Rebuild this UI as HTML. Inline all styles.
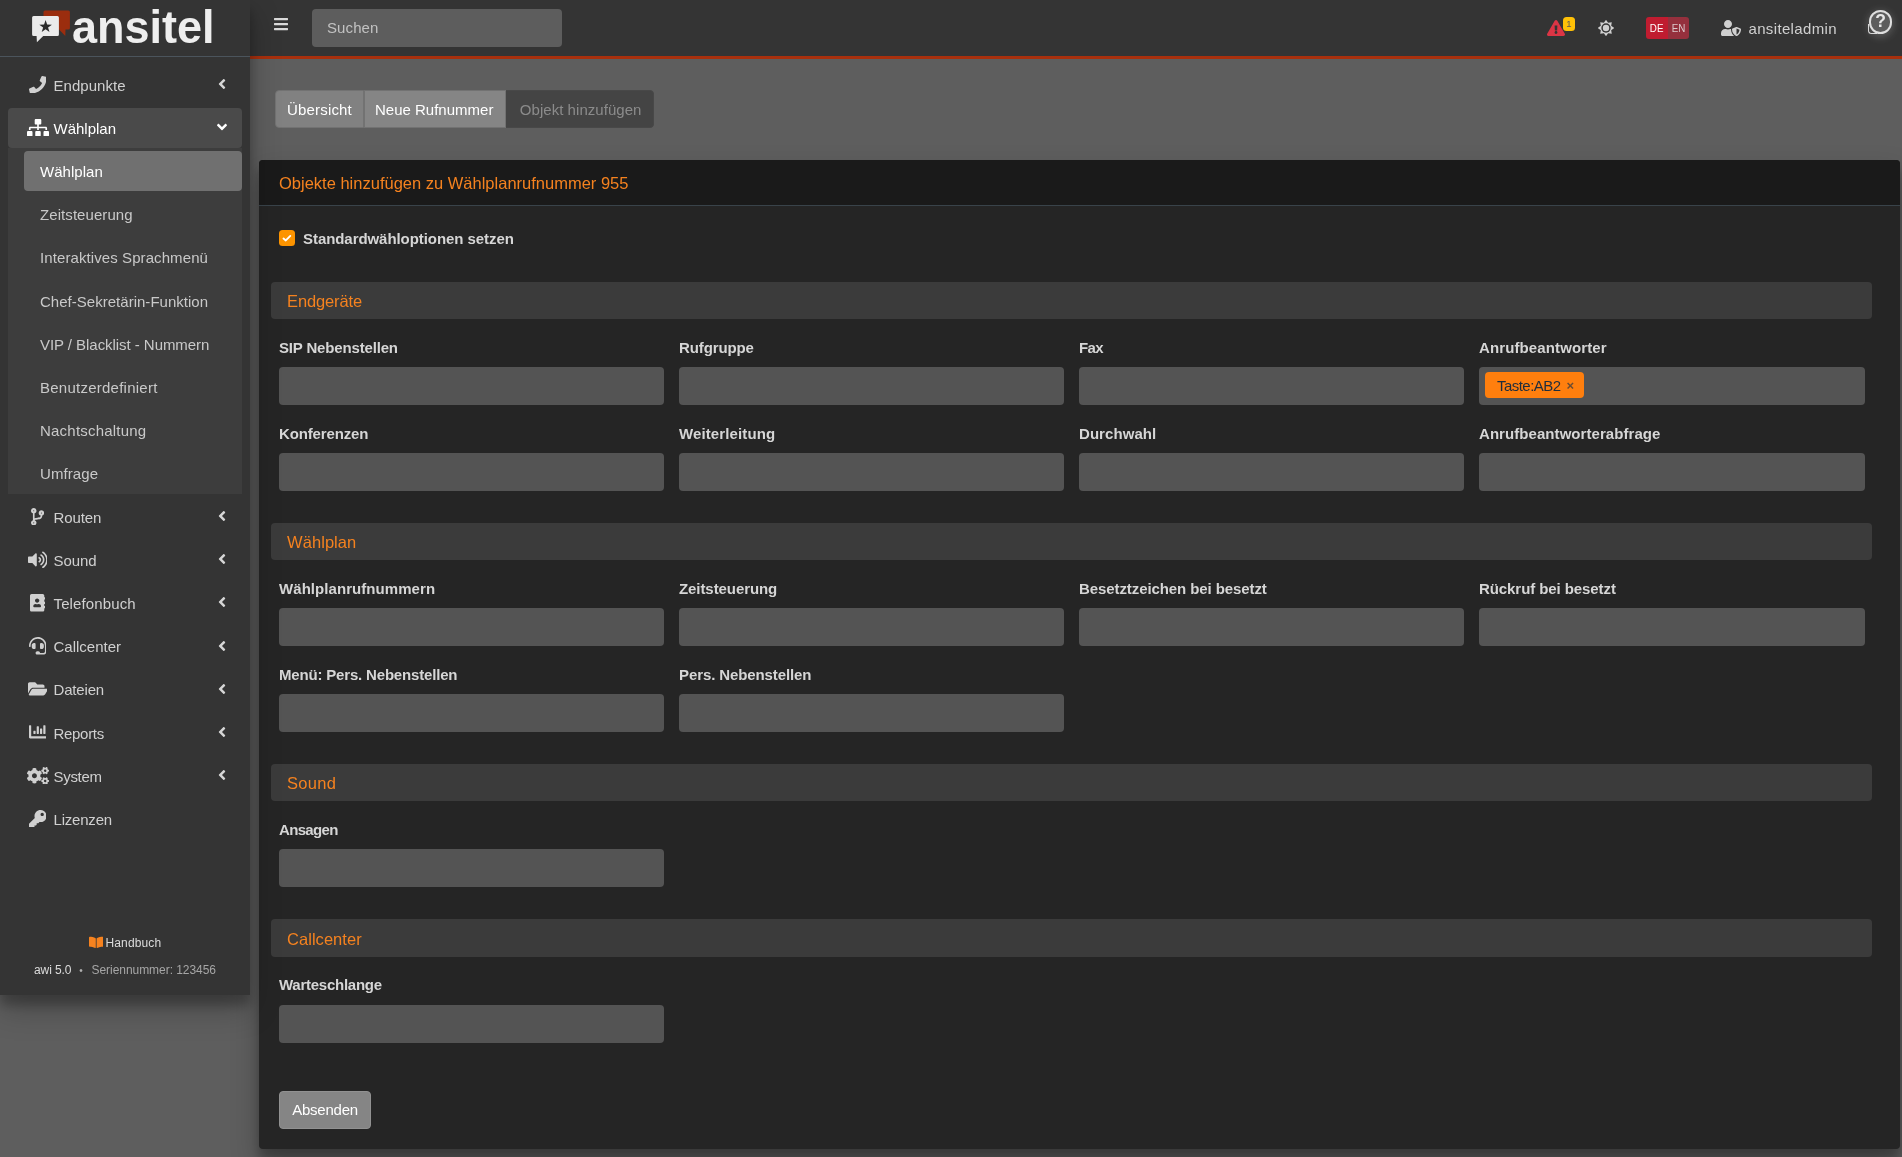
<!DOCTYPE html>
<html lang="de">
<head>
<meta charset="utf-8">
<title>ansitel - Wählplan</title>
<style>
*{box-sizing:border-box;margin:0;padding:0}
html,body{width:1902px;height:1157px;overflow:hidden}
body{background:#5e5e5e;font-family:"Liberation Sans",sans-serif;font-size:15px;color:#d6d6d6;position:relative}
svg{display:block}
/* ---------- navbar ---------- */
#navbar{will-change:transform;position:absolute;left:250px;top:0;width:1652px;height:59px;background:#343434;border-bottom:3px solid #a8300d}
#burger{position:absolute;left:24px;top:16px;width:14px;height:16px;fill:#d9d9d9}
#search{position:absolute;left:62px;top:9px;width:250px;height:38px;background:#5d5d5d;border-radius:4px;color:#c2c2c2;font-size:15px;line-height:38px;padding-left:15px}
#alert{position:absolute;left:1296.9px;top:19.8px;width:18px;height:16px;fill:#dc3545}
#badge{position:absolute;left:1313px;top:17px;width:12px;height:14px;background:#ffc107;border-radius:3.5px;color:#5a5a5a;font-size:9.500px;line-height:14px;text-align:center}
#sun{position:absolute;left:1347.600px;top:20px}
#lang{position:absolute;left:1396px;top:17px;width:43px;height:22px;border-radius:3px;overflow:hidden;display:flex;font-size:11px;line-height:23px;color:#fff;text-align:center}
#lang span{display:inline-block;transform:scaleX(.89)}
#lang .de{width:22px;background:#c01c30}
#lang .en{width:21px;background:#95303d;color:#dcc9cc}
#usr{position:absolute;left:1471px;top:20px;width:20px;height:16px;fill:#d0d0d0}
#uname{position:absolute;left:1498.500px;top:17px;line-height:23px;font-size:15px;color:#d0d0d0}
#help{position:absolute;left:1618.800px;top:10.200px;width:23.600px;height:23.600px;border-radius:12px;border:2.300px solid #dedede;background:#5c5c5c;box-shadow:0 2px 9px 1px rgba(255,255,255,.2);color:#e6e6e6;font-weight:bold;font-size:17.500px;line-height:19.500px;text-align:center}
#helpbg{position:absolute;left:1617.700px;top:24px;width:9px;height:10px;border:1.500px solid #d4d4d4;border-top:0;border-right:0;border-radius:0 0 0 3.500px}
/* ---------- sidebar ---------- */
#sidebar{will-change:transform;position:absolute;left:0;top:0;width:250px;height:995px;background:#343434;box-shadow:0 14px 28px rgba(0,0,0,.25),0 10px 10px rgba(0,0,0,.22);z-index:5}
#brand{height:57px;border-bottom:1px solid #4b545c;position:relative}
#brand .bubble{position:absolute;left:32px;top:10px}
#brand .wm{position:absolute;left:72px;top:1px;font-weight:bold;font-size:45px;line-height:52px;color:#eee;transform-origin:0 9px;transform:translateY(.3px) scaleY(1.028)}
.nav{position:absolute;left:8px;top:65px;width:234px}
.ni{position:relative;height:40px;margin-bottom:3.2px;border-radius:4px;color:#d0d0d0;font-size:15px;line-height:40px;padding:.75px 0 0 45.500px;white-space:nowrap}
.ni.open{background:#4a4a4a;color:#fff}
.ni svg.ic{position:absolute;top:10.700px;height:17.6px;fill:#d0d0d0}
.ni.open svg.ic{fill:#fff}
.ni svg.ar{position:absolute;right:16px;top:11.2px;width:8px;height:16px;fill:#d6d6d6}
.ni svg.ar.dn{transform:rotate(-90deg);fill:#fff}
.sub{background:#3d3d3d;margin-top:-3.2px;padding-top:3.2px;margin-bottom:3.2px;padding-bottom:.8px}
.si{height:39.2px;margin-bottom:4px;margin-left:16px;border-radius:4px;color:#c9c9c9;font-size:15px;line-height:40px;padding:.7px 0 0 16px;white-space:nowrap}
.si:last-child{margin-bottom:0}
.si.act{background:#707070;color:#fff}
#foot{position:absolute;left:0;width:250px;top:932px;font-size:12px;color:#dcdcdc;white-space:nowrap}
#foot svg{position:absolute;left:88.500px;top:3.900px;width:14.400px;height:12.800px;fill:#f5821f}
#foot .hb{position:absolute;left:105.500px;top:1px;line-height:20px}
#foot .v1{position:absolute;left:34px;top:28px;line-height:20px;letter-spacing:-.1px}
#foot .v2{position:absolute;left:79.300px;top:28.500px;line-height:20px;color:#b0b0b0;font-size:10px}
#foot .v3{position:absolute;left:91.500px;top:28px;line-height:20px;color:#a6a6a6}
/* ---------- content ---------- */
#tabs{will-change:transform;position:absolute;left:275px;top:90px;height:38px;display:flex;border-radius:4px;overflow:hidden}
#tabs div{height:38px;line-height:38px;font-size:15px;color:#fff;background:#858585;border:1px solid #727272;padding:0 11px;white-space:nowrap}
#tabs .t1{width:89px;border-radius:4px 0 0 4px;background:#818181}
#tabs .t2{width:142px;padding-left:10px}
#tabs .t3{width:148px;background:#444;border-color:#484848;border-left-width:0;color:#8b8b8b;padding-left:13.800px;border-radius:0 4px 4px 0}
#card{will-change:transform;position:absolute;left:259px;top:160px;width:1641px;height:989px;background:#252525;border-radius:4px;box-shadow:0 14px 28px rgba(0,0,0,.25),0 10px 10px rgba(0,0,0,.22)}
#card-h{height:46px;background:#1a1a1a;border-bottom:1px solid #39434a;border-radius:4px 4px 0 0;padding-left:20px;line-height:47px;font-size:16.500px;color:#f5821f;white-space:nowrap}
#chk{position:absolute;left:20px;width:16px;height:16px;background:#fd9400;border-radius:3.5px}
#chk svg{width:16px;height:16px}
.lb{position:absolute;font-weight:bold;font-size:15px;line-height:20px;color:#d6d6d6;white-space:nowrap}
.sec{position:absolute;left:12px;width:1601px;height:37px;background:#3b3b3b;border-radius:4px;padding-left:16px;line-height:39px;font-size:16.500px;color:#f5821f}
.in{position:absolute;width:385px;height:38px;background:#545454;border-radius:4px}
.c1{left:20px}.c2{left:420px}.c3{left:820px}.c4{left:1220px}
.in.c4{width:386px}
#tag{position:absolute;left:6px;top:5px;height:26px;line-height:28px;background:#ff7f0e;border-radius:4px;color:#1f2d3d;font-size:15px;padding:0 0 0 12px;width:99px;white-space:nowrap}
#tag b{font-weight:bold;font-size:13px;margin-left:6px;color:#6b4c33;position:relative;top:-1px}
#send{position:absolute;left:20px;width:92px;height:38px;background:#858585;border:1px solid #919191;border-radius:4px;color:#fff;font-size:15px;line-height:36px;text-align:center}
</style>
</head>
<body>
<div id="navbar">
  <svg id="burger" viewBox="0 0 448 512"><path d="M16 132h416c8.837 0 16-7.163 16-16V76c0-8.837-7.163-16-16-16H16C7.163 60 0 67.163 0 76v40c0 8.837 7.163 16 16 16zm0 160h416c8.837 0 16-7.163 16-16v-40c0-8.837-7.163-16-16-16H16c-8.837 0-16 7.163-16 16v40c0 8.837 7.163 16 16 16zm0 160h416c8.837 0 16-7.163 16-16v-40c0-8.837-7.163-16-16-16H16c-8.837 0-16 7.163-16 16v40c0 8.837 7.163 16 16 16z"/></svg>
  <div id="search"><span style="letter-spacing:0.1px">Suchen</span></div>
  <svg id="alert" viewBox="0 0 576 512"><path d="M569.500 440C588 472 564.800 512 527.900 512H48.100c-37 0-60-40.100-41.600-72L246.400 24c18.500-32 64.700-32 83.200 0l239.900 416zM288 354c-25.400 0-46 20.600-46 46s20.600 46 46 46 46-20.600 46-46-20.600-46-46-46zm-43.700-165.300l7.400 136c.3 6.400 5.600 11.300 12 11.300h48.500c6.400 0 11.600-5 12-11.300l7.400-136c.4-6.900-5.100-12.700-12-12.700h-63.400c-6.900 0-12.400 5.800-12 12.700z"/></svg>
  <div id="badge">1</div>
  <svg id="sun" width="16" height="16" viewBox="0 0 16 16"><polygon fill="#cfcfcf" points="8.00,-0.20 10.14,2.83 13.80,2.20 13.17,5.86 16.20,8.00 13.17,10.14 13.80,13.80 10.14,13.17 8.00,16.20 5.86,13.17 2.20,13.80 2.83,10.14 -0.20,8.00 2.83,5.86 2.20,2.20 5.86,2.83"/><circle cx="8" cy="8" r="4.700" fill="#343434"/><circle cx="8" cy="8" r="3.200" fill="#cfcfcf"/></svg>
  <div id="lang"><div class="de"><span>DE</span></div><div class="en"><span>EN</span></div></div>
  <svg id="usr" viewBox="0 0 640 512"><path d="M622.300 271.100l-115.200-45c-4.100-1.600-12.600-3.700-22.200 0l-115.200 45c-10.700 4.200-17.700 14-17.700 24.900 0 111.600 68.700 188.800 132.900 213.900 9.600 3.700 18 1.600 22.200 0C558.400 489.900 640 420.500 640 296c0-10.900-7-20.700-17.700-24.900zM496 462.400V273.300l95.500 37.300c-5.600 87.100-60.900 135.400-95.500 151.800zM224 256c70.700 0 128-57.300 128-128S294.700 0 224 0 96 57.300 96 128s57.300 128 128 128zm96 40c0-2.500.8-4.800 1.100-7.200-2.500-.1-4.900-.8-7.500-.8h-16.700c-22.200 10.200-46.900 16-72.900 16s-50.600-5.800-72.900-16h-16.700C60.200 288 0 348.200 0 422.400V464c0 26.500 21.500 48 48 48h352c6.800 0 13.300-1.500 19.200-4-54-42.900-99.200-116.700-99.200-212z"/></svg>
  <div id="uname"><span style="letter-spacing:0.345px">ansiteladmin</span></div>
  <div id="helpbg"></div><div id="help">?</div>
</div>
<div id="sidebar">
  <div id="brand">
    <svg class="bubble" width="40" height="34" viewBox="0 0 40 34"><path fill="#9b2d0e" d="M13 .5h23.400a1.500 1.500 0 0 1 1.500 1.500v16.100a1.500 1.500 0 0 1-1.500 1.500H33.500l-.2 6.300-6.300-6.300H13a1.500 1.500 0 0 1-1.500-1.500V2A1.500 1.500 0 0 1 13 .5z"/><path fill="#ebebeb" d="M1.600 6h23.800a1.500 1.500 0 0 1 1.500 1.500v16.900a1.500 1.500 0 0 1-1.500 1.500H11.200L4.900 32.200 4.600 25.900H1.600A1.500 1.500 0 0 1 .1 24.400V7.500A1.500 1.500 0 0 1 1.600 6z"/><polygon fill="#2a2a2a" points="13.60,10.10 15.13,14.60 19.88,14.66 16.07,17.50 17.48,22.04 13.60,19.30 9.72,22.04 11.13,17.50 7.32,14.66 12.07,14.60"/></svg>
    <div class="wm">ansitel</div>
  </div>
  <div class="nav">
    <div class="ni"><svg class="ic" style="width:17.6px;left:20.7px" viewBox="0 0 512 512"><path d="M493.400 24.600l-104-24c-11.300-2.600-22.900 3.300-27.500 13.900l-48 112c-4.200 9.800-1.400 21.300 6.900 28l60.600 49.600c-36 76.700-98.900 140.500-177.200 177.200l-49.600-60.600c-6.800-8.300-18.200-11.100-28-6.900l-112 48C3.900 366.500-2 378.100.6 389.400l24 104C27.100 504.200 36.700 512 48 512c256.100 0 464-207.500 464-464 0-11.200-7.700-20.900-18.600-23.400z"/></svg><span style="letter-spacing:0.05px">Endpunkte</span><svg class="ar" viewBox="0 0 256 512"><path d="M31.700 239l136-136c9.400-9.400 24.600-9.400 33.900 0l22.600 22.600c9.400 9.400 9.400 24.600 0 33.900L127.900 256l96.400 96.400c9.400 9.400 9.400 24.600 0 33.900L201.700 409c-9.400 9.400-24.600 9.400-33.900 0l-136-136c-9.500-9.400-9.500-24.600-.1-34z"/></svg></div>
    <div class="ni open"><svg class="ic" style="width:22.0px;left:18.5px" viewBox="0 0 640 512"><path d="M128 352H32c-17.670 0-32 14.330-32 32v96c0 17.670 14.330 32 32 32h96c17.670 0 32-14.330 32-32v-96c0-17.670-14.330-32-32-32zm-24-80h192v48h48v-48h192v48h48v-57.590c0-21.170-17.230-38.410-38.410-38.410H344v-64h40c17.670 0 32-14.330 32-32V32c0-17.670-14.330-32-32-32H256c-17.670 0-32 14.330-32 32v96c0 17.670 14.330 32 32 32h40v64H94.410C73.230 224 56 241.230 56 262.410V320h48v-48zm264 80h-96c-17.670 0-32 14.330-32 32v96c0 17.670 14.330 32 32 32h96c17.670 0 32-14.330 32-32v-96c0-17.670-14.330-32-32-32zm240 0h-96c-17.670 0-32 14.330-32 32v96c0 17.670 14.330 32 32 32h96c17.670 0 32-14.330 32-32v-96c0-17.670-14.330-32-32-32z"/></svg>Wählplan<svg class="ar dn" viewBox="0 0 256 512"><path d="M31.700 239l136-136c9.400-9.400 24.600-9.400 33.900 0l22.600 22.600c9.400 9.400 9.400 24.600 0 33.900L127.900 256l96.400 96.400c9.400 9.400 9.400 24.600 0 33.900L201.700 409c-9.400 9.400-24.600 9.400-33.900 0l-136-136c-9.500-9.400-9.500-24.600-.1-34z"/></svg></div>
    <div class="sub">
      <div class="si act"><span style="letter-spacing:0.042px">Wählplan</span></div>
      <div class="si"><span style="letter-spacing:0.075px">Zeitsteuerung</span></div>
      <div class="si"><span style="letter-spacing:0.091px">Interaktives Sprachmenü</span></div>
      <div class="si"><span style="letter-spacing:0.022px">Chef-Sekretärin-Funktion</span></div>
      <div class="si"><span style="letter-spacing:-0.05px">VIP / Blacklist - Nummern</span></div>
      <div class="si"><span style="letter-spacing:0.244px">Benutzerdefiniert</span></div>
      <div class="si"><span style="letter-spacing:0.215px">Nachtschaltung</span></div>
      <div class="si"><span style="letter-spacing:0.083px">Umfrage</span></div>
    </div>
    <div class="ni"><svg class="ic" style="width:13.2px;left:22.9px" viewBox="0 0 384 512"><path d="M384 144c0-44.2-35.8-80-80-80s-80 35.8-80 80c0 36.4 24.3 67.1 57.5 76.8-.6 16.1-4.2 28.5-11 36.900-15.400 19.200-49.300 22.400-85.200 25.700-28.200 2.600-57.400 5.400-81.300 16.900v-144c32.500-10.200 56-40.500 56-76.300 0-44.200-35.800-80-80-80S0 35.800 0 80c0 35.800 23.500 66.100 56 76.300v199.300C23.500 365.900 0 396.200 0 432c0 44.200 35.800 80 80 80s80-35.800 80-80c0-34-21.200-63.100-51.200-74.600 3.100-5.200 7.800-9.800 14.900-13.400 16.200-8.200 40.400-10.400 66.100-12.800 42.200-3.900 90-8.400 118.200-43.400 14-17.400 21.100-39.800 21.600-67.900 31.600-10.800 54.400-40.700 54.400-75.900zM80 64c8.800 0 16 7.200 16 16s-7.200 16-16 16-16-7.200-16-16 7.200-16 16-16zm0 384c-8.800 0-16-7.200-16-16s7.200-16 16-16 16 7.200 16 16-7.200 16-16 16zm224-320c8.800 0 16 7.200 16 16s-7.200 16-16 16-16-7.200-16-16 7.200-16 16-16z"/></svg><span style="letter-spacing:-0.12px">Routen</span><svg class="ar" viewBox="0 0 256 512"><path d="M31.700 239l136-136c9.400-9.400 24.600-9.400 33.900 0l22.600 22.600c9.400 9.400 9.400 24.600 0 33.900L127.900 256l96.400 96.400c9.400 9.400 9.400 24.600 0 33.900L201.700 409c-9.400 9.400-24.600 9.400-33.900 0l-136-136c-9.500-9.400-9.500-24.600-.1-34z"/></svg></div>
    <div class="ni"><svg class="ic" style="width:19.8px;left:19.6px" viewBox="0 0 576 512"><path d="M215.030 71.050L126.060 160H24c-13.260 0-24 10.740-24 24v144c0 13.250 10.740 24 24 24h102.060l88.970 88.950c15.030 15.030 40.970 4.470 40.970-16.970V88.020c0-21.460-25.960-31.980-40.970-16.970zm233.320-51.080c-11.170-7.330-26.180-4.240-33.510 6.950-7.340 11.170-4.220 26.180 6.950 33.510 66.270 43.490 105.820 116.600 105.820 195.580 0 78.980-39.550 152.090-105.820 195.580-11.170 7.320-14.290 22.340-6.950 33.500 7.040 10.710 21.930 14.560 33.510 6.950C528.270 439.580 576 351.330 576 256S528.270 72.430 448.350 19.970zM480 256c0-63.530-32.060-121.940-85.770-156.240-11.190-7.140-26.030-3.820-33.120 7.460s-3.780 26.210 7.410 33.360C408.270 165.970 432 209.110 432 256s-23.730 90.030-63.480 115.420c-11.190 7.140-14.500 22.070-7.410 33.360 6.510 10.360 21.120 15.140 33.120 7.460C447.940 377.940 480 319.540 480 256zm-141.770-76.870c-11.580-6.330-26.190-2.160-32.610 9.450-6.390 11.610-2.160 26.200 9.450 32.610C327.980 228.280 336 241.630 336 256c0 14.380-8.020 27.720-20.920 34.810-11.610 6.410-15.840 21-9.450 32.610 6.430 11.660 21.050 15.800 32.610 9.450 28.230-15.550 45.770-45 45.770-76.880s-17.540-61.320-45.780-76.860z"/></svg><span style="letter-spacing:-0.1px">Sound</span><svg class="ar" viewBox="0 0 256 512"><path d="M31.700 239l136-136c9.400-9.400 24.600-9.400 33.900 0l22.600 22.600c9.400 9.400 9.400 24.600 0 33.900L127.900 256l96.400 96.400c9.400 9.400 9.400 24.600 0 33.900L201.700 409c-9.400 9.400-24.600 9.400-33.900 0l-136-136c-9.500-9.400-9.500-24.600-.1-34z"/></svg></div>
    <div class="ni"><svg class="ic" style="width:15.4px;left:21.8px" viewBox="0 0 448 512"><path d="M436 160c6.600 0 12-5.400 12-12v-40c0-6.600-5.400-12-12-12h-20V48c0-26.500-21.500-48-48-48H48C21.500 0 0 21.500 0 48v416c0 26.500 21.500 48 48 48h320c26.500 0 48-21.500 48-48v-48h20c6.600 0 12-5.400 12-12v-40c0-6.600-5.400-12-12-12h-20v-64h20c6.600 0 12-5.400 12-12v-40c0-6.600-5.400-12-12-12h-20v-64h20zm-228-32c35.300 0 64 28.700 64 64s-28.700 64-64 64-64-28.700-64-64 28.700-64 64-64zm112 236.800c0 10.600-10 19.200-22.400 19.200H118.400C106 384 96 375.400 96 364.800v-19.200c0-31.800 30.100-57.600 67.200-57.600h5c12.300 5.100 25.700 8 39.800 8s27.600-2.900 39.800-8h5c37.100 0 67.200 25.800 67.200 57.600v19.200z"/></svg><span style="letter-spacing:0.13px">Telefonbuch</span><svg class="ar" viewBox="0 0 256 512"><path d="M31.700 239l136-136c9.400-9.400 24.600-9.400 33.900 0l22.600 22.600c9.400 9.400 9.400 24.600 0 33.900L127.900 256l96.400 96.400c9.400 9.400 9.400 24.600 0 33.900L201.700 409c-9.400 9.400-24.600 9.400-33.900 0l-136-136c-9.500-9.400-9.500-24.600-.1-34z"/></svg></div>
    <div class="ni"><svg class="ic" style="width:17.6px;left:20.7px" viewBox="0 0 512 512"><path d="M192 208c0-17.670-14.330-32-32-32h-16c-35.350 0-64 28.650-64 64v48c0 35.350 28.650 64 64 64h16c17.670 0 32-14.330 32-32V208zm176 144c35.350 0 64-28.650 64-64v-48c0-35.350-28.650-64-64-64h-16c-17.670 0-32 14.330-32 32v112c0 17.670 14.330 32 32 32h16zM256 0C113.180 0 4.580 118.830 0 256v16c0 8.840 7.160 16 16 16h16c8.840 0 16-7.160 16-16v-16c0-114.690 93.310-208 208-208s208 93.310 208 208h-.12c.08 2.430.12 165.720.12 165.720 0 23.350-18.930 42.280-42.280 42.280H320c0-26.510-21.490-48-48-48h-32c-26.510 0-48 21.490-48 48s21.490 48 48 48h181.720c49.860 0 90.280-40.420 90.280-90.280V256C507.420 118.830 398.820 0 256 0z"/></svg>Callcenter<svg class="ar" viewBox="0 0 256 512"><path d="M31.700 239l136-136c9.400-9.400 24.600-9.400 33.900 0l22.600 22.600c9.400 9.400 9.400 24.600 0 33.900L127.900 256l96.400 96.400c9.400 9.400 9.400 24.600 0 33.900L201.700 409c-9.400 9.400-24.600 9.400-33.900 0l-136-136c-9.500-9.400-9.500-24.600-.1-34z"/></svg></div>
    <div class="ni"><svg class="ic" style="width:19.8px;left:19.6px" viewBox="0 0 576 512"><path d="M572.694 292.093L500.270 416.248A63.997 63.997 0 0 1 444.989 448H45.025c-18.523 0-30.064-20.093-20.731-36.093l72.424-124.155A64 64 0 0 1 152 256h399.964c18.523 0 30.064 20.093 20.730 36.093zM152 224h328v-48c0-26.510-21.490-48-48-48H272l-64-64H48C21.490 64 0 85.490 0 112v278.046l69.077-118.418C86.214 242.250 117.989 224 152 224z"/></svg><span style="letter-spacing:-0.167px">Dateien</span><svg class="ar" viewBox="0 0 256 512"><path d="M31.700 239l136-136c9.400-9.400 24.600-9.400 33.900 0l22.600 22.600c9.400 9.400 9.400 24.600 0 33.900L127.900 256l96.400 96.400c9.400 9.400 9.400 24.600 0 33.900L201.700 409c-9.400 9.400-24.600 9.400-33.900 0l-136-136c-9.500-9.400-9.500-24.600-.1-34z"/></svg></div>
    <div class="ni"><svg class="ic" style="width:17.6px;left:20.7px" viewBox="0 0 512 512"><path d="M332.800 320h38.400c6.400 0 12.800-6.400 12.800-12.800V172.800c0-6.400-6.400-12.800-12.800-12.800h-38.400c-6.400 0-12.800 6.400-12.800 12.800v134.400c0 6.400 6.400 12.800 12.800 12.800zm96 0h38.400c6.400 0 12.800-6.400 12.800-12.800V76.800c0-6.400-6.400-12.800-12.800-12.800h-38.400c-6.400 0-12.800 6.400-12.800 12.800v230.400c0 6.400 6.400 12.800 12.800 12.800zm-288 0h38.400c6.400 0 12.800-6.400 12.800-12.800v-70.400c0-6.400-6.400-12.800-12.800-12.800h-38.400c-6.400 0-12.800 6.400-12.800 12.800v70.400c0 6.400 6.400 12.800 12.800 12.800zm96 0h38.400c6.400 0 12.800-6.400 12.800-12.800V108.800c0-6.400-6.400-12.800-12.800-12.800h-38.400c-6.400 0-12.800 6.400-12.800 12.800v198.400c0 6.400 6.400 12.800 12.800 12.800zM496 384H64V80c0-8.840-7.160-16-16-16H16C7.160 64 0 71.160 0 80v336c0 17.670 14.330 32 32 32h464c8.840 0 16-7.160 16-16v-32c0-8.840-7.160-16-16-16z"/></svg><span style="letter-spacing:-0.3px">Reports</span><svg class="ar" viewBox="0 0 256 512"><path d="M31.700 239l136-136c9.400-9.400 24.600-9.400 33.900 0l22.600 22.600c9.400 9.400 9.400 24.600 0 33.900L127.900 256l96.400 96.400c9.400 9.400 9.400 24.600 0 33.900L201.700 409c-9.400 9.400-24.600 9.400-33.900 0l-136-136c-9.500-9.400-9.500-24.600-.1-34z"/></svg></div>
    <div class="ni"><svg class="ic" style="width:22.0px;left:18.5px" viewBox="0 0 640 512"><path d="M512.100 191l-8.200 14.300c-3 5.300-9.400 7.500-15.100 5.400-11.800-4.400-22.600-10.700-32.100-18.600-4.600-3.800-5.800-10.500-2.800-15.700l8.200-14.300c-6.900-8-12.300-17.300-15.900-27.400h-16.500c-6 0-11.200-4.300-12.200-10.300-2-12-2.100-24.600 0-37.100 1-6 6.200-10.400 12.200-10.400h16.500c3.600-10.100 9-19.400 15.900-27.400l-8.200-14.300c-3-5.200-1.900-11.900 2.800-15.700 9.500-7.900 20.400-14.200 32.100-18.600 5.700-2.100 12.100.1 15.100 5.400l8.200 14.300c10.500-1.900 21.200-1.900 31.700 0L552 6.300c3-5.300 9.400-7.500 15.100-5.400 11.800 4.400 22.600 10.700 32.100 18.600 4.600 3.800 5.800 10.500 2.800 15.700l-8.200 14.300c6.900 8 12.300 17.300 15.900 27.400h16.500c6 0 11.200 4.300 12.200 10.300 2 12 2.100 24.600 0 37.100-1 6-6.200 10.400-12.200 10.400h-16.500c-3.600 10.100-9 19.400-15.900 27.400l8.200 14.300c3 5.200 1.900 11.900-2.800 15.700-9.500 7.900-20.400 14.200-32.100 18.600-5.700 2.100-12.100-.1-15.100-5.400l-8.200-14.300c-10.400 1.900-21.200 1.900-31.700 0zm-10.500-58.800c38.500 29.600 82.400-14.300 52.800-52.800-38.500-29.700-82.400 14.300-52.800 52.800zM386.300 286.100l33.700 16.800c10.100 5.800 14.500 18.100 10.500 29.100-8.900 24.200-26.400 46.400-42.600 65.800-7.400 8.900-20.200 11.100-30.300 5.300l-29.100-16.800c-16 13.700-34.600 24.600-54.900 31.700v33.600c0 11.600-8.300 21.600-19.700 23.600-24.600 4.200-50.400 4.400-75.900 0-11.500-2-20-11.900-20-23.600V418c-20.300-7.200-38.900-18-54.900-31.700L74 403c-10 5.800-22.900 3.600-30.300-5.300-16.200-19.400-33.300-41.600-42.200-65.700-4-10.900.4-23.200 10.500-29.100l33.300-16.800c-3.900-20.900-3.900-42.400 0-63.400L12 205.800c-10.100-5.800-14.600-18.100-10.500-29 8.900-24.200 26-46.400 42.200-65.800 7.400-8.900 20.200-11.100 30.300-5.300l29.100 16.800c16-13.700 34.600-24.600 54.900-31.700V57.100c0-11.500 8.200-21.500 19.600-23.500 24.600-4.200 50.500-4.400 76-.1 11.500 2 20 11.900 20 23.600v33.600c20.300 7.200 38.900 18 54.900 31.700l29.100-16.800c10-5.800 22.900-3.600 30.300 5.300 16.200 19.400 33.200 41.600 42.100 65.800 4 10.900.1 23.200-10 29.100l-33.700 16.800c3.900 21 3.900 42.500 0 63.500zm-117.600 21.100c59.200-77-28.700-164.900-105.700-105.700-59.200 77 28.700 164.900 105.700 105.700zm243.400 182.700l-8.200 14.300c-3 5.300-9.400 7.500-15.100 5.400-11.800-4.400-22.600-10.700-32.100-18.600-4.600-3.800-5.800-10.500-2.800-15.700l8.200-14.300c-6.900-8-12.300-17.300-15.900-27.400h-16.500c-6 0-11.200-4.300-12.200-10.300-2-12-2.100-24.600 0-37.100 1-6 6.200-10.400 12.200-10.400h16.500c3.600-10.100 9-19.400 15.900-27.400l-8.200-14.300c-3-5.200-1.900-11.900 2.800-15.700 9.500-7.900 20.400-14.200 32.100-18.600 5.700-2.100 12.100.1 15.100 5.400l8.200 14.300c10.500-1.900 21.200-1.900 31.700 0l8.200-14.300c3-5.300 9.400-7.500 15.100-5.400 11.800 4.400 22.600 10.700 32.100 18.600 4.600 3.800 5.800 10.500 2.800 15.700l-8.200 14.300c6.900 8 12.300 17.300 15.900 27.400h16.500c6 0 11.200 4.300 12.200 10.300 2 12 2.100 24.600 0 37.100-1 6-6.200 10.400-12.200 10.400h-16.500c-3.600 10.100-9 19.400-15.900 27.400l8.200 14.300c3 5.200 1.900 11.900-2.800 15.700-9.500 7.900-20.400 14.200-32.100 18.600-5.700 2.100-12.100-.1-15.100-5.400l-8.200-14.300c-10.400 1.900-21.200 1.900-31.700 0zM501.600 431c38.500 29.600 82.400-14.300 52.800-52.800-38.500-29.600-82.400 14.300-52.800 52.800z"/></svg><span style="letter-spacing:-0.3px">System</span><svg class="ar" viewBox="0 0 256 512"><path d="M31.700 239l136-136c9.400-9.400 24.600-9.400 33.900 0l22.600 22.600c9.400 9.400 9.400 24.600 0 33.900L127.900 256l96.400 96.400c9.400 9.400 9.400 24.600 0 33.900L201.700 409c-9.400 9.400-24.600 9.400-33.900 0l-136-136c-9.500-9.400-9.500-24.600-.1-34z"/></svg></div>
    <div class="ni"><svg class="ic" style="width:17.6px;left:20.7px" viewBox="0 0 512 512"><path d="M512 176.001C512 273.203 433.202 352 336 352c-11.220 0-22.190-1.062-32.827-3.069l-24.012 27.014A23.999 23.999 0 0 1 261.223 384H224v40c0 13.255-10.745 24-24 24h-40v40c0 13.255-10.745 24-24 24H24c-13.255 0-24-10.745-24-24v-78.059c0-6.365 2.529-12.470 7.029-16.971l161.802-161.802C163.108 213.814 160 195.271 160 176 160 78.798 238.797.001 335.999 0 433.488-.001 512 78.511 512 176.001zM336 128c0 26.510 21.490 48 48 48s48-21.490 48-48-21.490-48-48-48-48 21.490-48 48z"/></svg><span style="letter-spacing:-0.199px">Lizenzen</span></div>
  </div>
  <div id="foot">
    <svg viewBox="0 0 576 512"><path d="M542.220 32.050c-54.800 3.110-163.720 14.430-230.960 55.590-4.640 2.840-7.270 7.890-7.270 13.170v363.870c0 11.550 12.630 18.850 23.280 13.490 69.180-34.820 169.230-44.320 218.700-46.920 16.890-.89 30.020-14.430 30.020-30.660V62.750c.01-17.710-15.350-31.740-33.770-30.700zM264.730 87.640C197.500 46.480 88.580 35.170 33.780 32.050 15.360 31.010 0 45.040 0 62.750V400.600c0 16.240 13.130 29.780 30.020 30.660 49.490 2.600 149.590 12.110 218.770 46.950 10.620 5.350 23.210-1.940 23.210-13.460V100.630c0-5.290-2.620-10.140-7.270-12.990z"/></svg><div class="hb"><span style="letter-spacing:0.128px">Handbuch</span></div>
    <div class="v1">awi 5.0</div><div class="v2">•</div><div class="v3"><span style="letter-spacing:-0.047px">Seriennummer: 123456</span></div>
  </div>
</div>
<div id="tabs"><div class="t1"><span style="letter-spacing:0.175px">Übersicht</span></div><div class="t2">Neue Rufnummer</div><div class="t3"><span style="letter-spacing:0.044px">Objekt hinzufügen</span></div></div>
<div id="card">
  <div id="card-h">Objekte hinzufügen zu Wählplanrufnummer 955</div>
  <div id="chk" style="top:70px"><svg viewBox="0 0 16 16"><path d="M4.500 8.500l2.300 1.900 4.500-4.500" fill="none" stroke="#fff" stroke-width="1.900" stroke-linecap="round" stroke-linejoin="round"/></svg></div>
  <div class="lb" style="left:44px;top:69px"><span style="letter-spacing:-0.062px">Standardwähloptionen setzen</span></div>
  <div class="sec" style="top:122px"><span style="letter-spacing:-0.125px">Endgeräte</span></div>
  <div class="lb c1" style="top:178px"><span style="letter-spacing:-0.161px">SIP Nebenstellen</span></div><div class="in c1" style="top:207px"></div>
  <div class="lb c2" style="top:178px"><span style="letter-spacing:-0.111px">Rufgruppe</span></div><div class="in c2" style="top:207px"></div>
  <div class="lb c3" style="top:178px"><span style="letter-spacing:-0.6px">Fax</span></div><div class="in c3" style="top:207px"></div>
  <div class="lb c4" style="top:178px"><span style="letter-spacing:0.113px">Anrufbeantworter</span></div><div class="in c4" style="top:207px"><div id="tag"><span style="letter-spacing:-0.539px">Taste:AB2</span><b>×</b></div></div>
  <div class="lb c1" style="top:264px"><span style="letter-spacing:-0.14px">Konferenzen</span></div><div class="in c1" style="top:293px"></div>
  <div class="lb c2" style="top:264px"><span style="letter-spacing:0.116px">Weiterleitung</span></div><div class="in c2" style="top:293px"></div>
  <div class="lb c3" style="top:264px"><span style="letter-spacing:0.064px">Durchwahl</span></div><div class="in c3" style="top:293px"></div>
  <div class="lb c4" style="top:264px"><span style="letter-spacing:0.063px">Anrufbeantworterabfrage</span></div><div class="in c4" style="top:293px"></div>
  <div class="sec" style="top:363px"><span style="letter-spacing:0.071px">Wählplan</span></div>
  <div class="lb c1" style="top:419px"><span style="letter-spacing:0.064px">Wählplanrufnummern</span></div><div class="in c1" style="top:448px"></div>
  <div class="lb c2" style="top:419px"><span style="letter-spacing:-0.075px">Zeitsteuerung</span></div><div class="in c2" style="top:448px"></div>
  <div class="lb c3" style="top:419px"><span style="letter-spacing:-0.088px">Besetztzeichen bei besetzt</span></div><div class="in c3" style="top:448px"></div>
  <div class="lb c4" style="top:419px"><span style="letter-spacing:-0.078px">Rückruf bei besetzt</span></div><div class="in c4" style="top:448px"></div>
  <div class="lb c1" style="top:505px"><span style="letter-spacing:-0.177px">Menü: Pers. Nebenstellen</span></div><div class="in c1" style="top:534px"></div>
  <div class="lb c2" style="top:505px"><span style="letter-spacing:-0.1px">Pers. Nebenstellen</span></div><div class="in c2" style="top:534px"></div>
  <div class="sec" style="top:604px"><span style="letter-spacing:0.275px">Sound</span></div>
  <div class="lb c1" style="top:660px"><span style="letter-spacing:-0.667px">Ansagen</span></div><div class="in c1" style="top:689px"></div>
  <div class="sec" style="top:759px;height:38px;line-height:41px"><span style="letter-spacing:0.045px">Callcenter</span></div>
  <div class="lb c1" style="top:815px"><span style="letter-spacing:-0.258px">Warteschlange</span></div><div class="in c1" style="top:845px"></div>
  <div id="send" style="top:931px"><span style="letter-spacing:-0.229px">Absenden</span></div>
</div>
</body>
</html>
